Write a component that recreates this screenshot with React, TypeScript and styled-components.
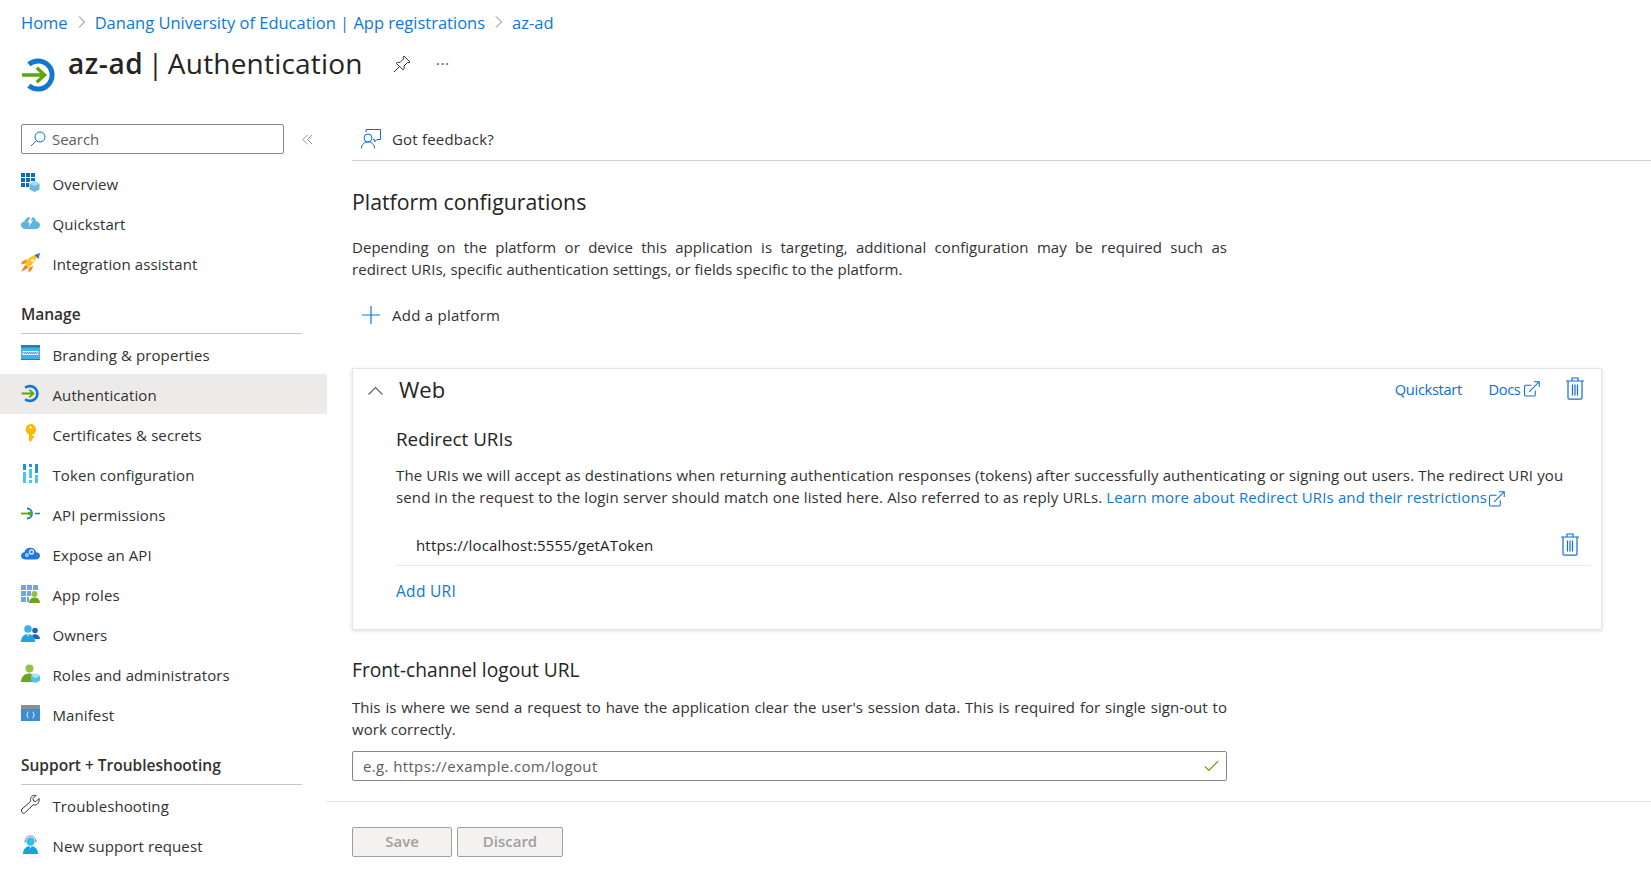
import React from 'react';
import styled, { createGlobalStyle } from 'styled-components';

const GlobalStyle = createGlobalStyle`
  html, body { margin: 0; padding: 0; background: #fff; }
  body {
    font-family: "Open Sans", "Noto Sans", "Liberation Sans", sans-serif;
    color: #252423;
    font-size: 15px;
    overflow: hidden;
  }
  * { box-sizing: border-box; }
`;

const AuthIcon = ({ size }: { size: number }) => (
  <svg width={size} height={size} viewBox="0 0 32 32" fill="none">
    <path d="M7 6.500A12.500 12.500 0 1 1 7 25.500" stroke="#0f78d4" strokeWidth="4.400" />
    <path d="M1 16H21M14 9.500l7 6.500-7 6.500" stroke="#5ca60b" strokeWidth="3" />
  </svg>
);

const GridIcon = () => (
  <svg width="19" height="19" viewBox="0 0 19 19">
    <path fill="#0a6cc2" d="M0 0h4v4H0zM5 0h4v4H5zM10 0h4v4h-4zM0 5h4v4H0zM5 5h4v4H5zM10 5h4v3h-4zM0 10h4v4H0zM5 10h3v4H5z" />
    <path fill="#6cb8e4" d="M13.500 8l5 2.500v6L13.500 19l-5-2.500v-6z" />
    <path fill="#a9d9f2" d="M13.500 8l5 2.500-5 2.500-5-2.500z" />
  </svg>
);

const QuickstartIcon = () => (
  <svg width="19" height="19" viewBox="0 0 19 19">
    <path fill="#5db4de" d="M4.500 16C2 16 0 14.400 0 12.200 0 10.200 1.500 8.800 3.400 8.600 3.900 6.400 5.200 5 7 4.500l5-.500c1.500.6 2.800 2.400 3.300 4.600 2 .1 3.700 1.500 3.700 3.600 0 2.200-2 3.800-4.500 3.800z" />
    <path fill="#fff" d="M10.500 2.500L6.500 9.500h2.300L7.500 14l4.500-6.500H9.700l2.300-4z" />
  </svg>
);

const RocketIcon = () => (
  <svg width="19" height="19" viewBox="0 0 19 19">
    <path fill="#f78d1e" d="M6 6L1 8.500 0 11.500l4.500-1zM12.500 13L10 18l-3 1 1-4.500z" />
    <path fill="#f57c1a" d="M4.500 11.500L0 19l7.500-4.500z" />
    <path fill="#fbc516" d="M4 10.500C7 5 11.500 2.300 16 1.500c-.5 4.500-3.200 9-8.500 12.500z" />
    <path fill="#2f73c9" d="M13.500 2L19 0l-1.500 6z" />
    <circle cx="11.500" cy="7.500" r="1.400" fill="#fff" />
  </svg>
);

const BrandingIcon = () => (
  <svg width="19" height="19" viewBox="0 0 19 19">
    <path fill="#3fb2e8" d="M0 1h19v15H0z" />
    <path fill="#1f7fbd" d="M0 1h19v2.500H0zM0 15h19v1H0z" />
    <path fill="#e3f5fd" d="M1.500 7h16v4h-16z" />
    <path stroke="#3a96cb" strokeWidth=".9" fill="none" d="M2.500 8l1 2 1-2 1 2 1-2 1 2 1-2 1 2 1-2 1 2 1-2 1 2 1-2 1 2 1-2" />
  </svg>
);

const KeyIcon = () => (
  <svg width="19" height="19" viewBox="0 0 19 19">
    <path fill="#fcb900" d="M9.500 0a5.500 5.500 0 0 1 2 10.600V12H13v2h-1.500v1.500L9.500 18 8 16.500v-6A5.500 5.500 0 0 1 9.500 0z" />
    <circle cx="9.500" cy="3.500" r="1.200" fill="#fff2c2" />
  </svg>
);

const TokenIcon = () => (
  <svg width="19" height="19" viewBox="0 0 19 19">
    <path fill="#2a8fd8" d="M2 0h3v6H2zM8 0h3v3H8zM14 0h3v9h-3z" />
    <path fill="#49c6ef" d="M2 8h3v11H2zM8 5h3v9H8zM14 11h3v8h-3zM8 16h3v3H8z" />
  </svg>
);

const ApiIcon = () => (
  <svg width="19" height="19" viewBox="0 0 19 19" fill="none">
    <path d="M6 4.500a5 5 0 1 1 0 10" stroke="#1a7bc6" strokeWidth="1.800" />
    <path d="M14 9.500h5" stroke="#1a7bc6" strokeWidth="1.500" />
    <path d="M0 9.500h9" stroke="#5ca60b" strokeWidth="1.800" />
    <circle cx="9" cy="9.500" r="2" fill="#5ca60b" />
  </svg>
);

const ExposeIcon = () => (
  <svg width="19" height="19" viewBox="0 0 19 19">
    <path fill="#1f79d8" d="M4.500 15.500C2 15.500 0 14 0 11.800 0 9.800 1.500 8.500 3.400 8.300 3.900 5.600 6 3.700 9.500 3.700c3 0 5 1.800 5.800 4.600 2 .1 3.700 1.500 3.700 3.500 0 2.200-2 3.700-4.500 3.700z" />
    <circle cx="10.500" cy="8" r="2" fill="none" stroke="#d6ecfb" strokeWidth="1.300" />
    <circle cx="6" cy="11" r="1.300" fill="none" stroke="#d6ecfb" strokeWidth="1.100" />
  </svg>
);

const AppRolesIcon = () => (
  <svg width="19" height="19" viewBox="0 0 19 19">
    <path fill="#6ea6e6" d="M0 1h5v5H0zM6 1h5v5H6zM12 1h5v5h-5zM0 7h5v5H0zM6 7h4v5H6zM0 13h5v5H0zM6 13h2v5H6z" />
    <circle cx="13.500" cy="10" r="3" fill="#8ec63f" />
    <path fill="#6ba51f" d="M8 19c0-3.500 2.500-5.500 5.500-5.500S19 15.500 19 19z" />
  </svg>
);

const OwnersIcon = () => (
  <svg width="19" height="19" viewBox="0 0 19 19">
    <circle cx="14" cy="6.500" r="2.800" fill="#1f62b9" />
    <path fill="#1f62b9" d="M10 15c0-3 1.800-4.800 4-4.800s5 1.800 5 4.800z" />
    <circle cx="7" cy="5" r="3.800" fill="#39b3e6" />
    <path fill="#26a3d9" d="M0 18c0-5 3-8 7-8s7 3 7 8z" />
    <path fill="#d8f1fb" d="M6 10h2l-1 3z" />
  </svg>
);

const RolesIcon = () => (
  <svg width="19" height="19" viewBox="0 0 19 19">
    <circle cx="8.500" cy="4.500" r="4" fill="#8ec63f" />
    <path fill="#6ba51f" d="M0 18c0-5 3.500-8.500 8-8.500s8 3.500 8 8.500z" />
    <path fill="#4fc3f0" d="M14.500 9.500l4.500 2.300v4.700L14.500 19 10 16.500v-4.700z" />
    <path fill="#a5e3f9" d="M14.500 9.500l4.500 2.300-4.500 2.400-4.500-2.400z" />
  </svg>
);

const ManifestIcon = () => (
  <svg width="19" height="19" viewBox="0 0 19 19">
    <path fill="#8a8f94" d="M0 1h19v4H0z" />
    <path fill="#3b8fd0" d="M0 5h19v12H0z" />
    <path fill="none" stroke="#fff" strokeWidth=".9" d="M7.500 8c-1.200 0-1 1-1 1.500s-.2 1.500-1 1.500c.8 0 1 1 1 1.500s-.2 1.500 1 1.500M11.500 8c1.200 0 1 1 1 1.500s.2 1.500 1 1.500c-.8 0-1 1-1 1.500s.2 1.500-1 1.500" />
  </svg>
);

const WrenchIcon = () => (
  <svg width="19" height="19" viewBox="0 0 19 19" fill="none">
    <path d="M18 3.500l-3 3-2.500-.5-.5-2.500 3-3c-2.500-.8-5.500.8-5.500 4 0 .7.100 1.200.3 1.700L1 14c-1.300 1.300-.6 2.800 0 3.500.8.800 2.300 1.200 3.300 0L12 9.800c3.300 1.200 7-1.800 6-6.300z" stroke="#323130" strokeWidth="1" />
  </svg>
);

const SupportIcon = () => (
  <svg width="19" height="19" viewBox="0 0 19 19">
    <path d="M4 7.500C4 3 6.500 1 9.500 1S15 3 15 7.500" fill="none" stroke="#7a7a7a" strokeWidth="1" />
    <circle cx="9.500" cy="6.500" r="4.200" fill="#2fc0ea" />
    <path fill="#12a5d8" d="M2 19c0-5 3-8 7.500-8S17 14 17 19z" />
    <path fill="#e4f6fc" d="M8.500 11h2l-1 3z" />
  </svg>
);

const ExternalIcon = () => (
  <svg width="16" height="16" viewBox="0 0 17 17" fill="none" stroke="#0f6cd8" strokeWidth="1.100">
    <path d="M8 4.500H2A1.500 1.500 0 0 0 .6 6v9A1.500 1.500 0 0 0 2 16h8.500a1.500 1.500 0 0 0 1.500-1.500V10" />
    <path d="M5.500 11.500L16 1M10.500.8h5.700v5.700" />
  </svg>
);

const TrashIcon = () => (
  <svg width="18" height="23" viewBox="0 0 18 23" fill="none" stroke="#0f6cd8" strokeWidth="1.200">
    <path d="M0 4h18M6 4V1h6v3M2 4v17a1.200 1.200 0 0 0 1.200 1.200h11.600A1.200 1.200 0 0 0 16 21V4M6.500 7.500v11M9 7.500v11M11.500 7.500v11" />
  </svg>
);

const Page = styled.div`
  width: 1651px;
  height: 874px;
  overflow: hidden;
  display: flex;
  flex-direction: column;
`;

const Header = styled.header`
  padding: 12px 0 0 21px;
  height: 124px;
`;

const Breadcrumb = styled.nav`
  display: flex;
  align-items: center;
  height: 20px;
  gap: 10px;
  font-size: 16.500px;
  margin-bottom: 13px;
`;

const Crumb = styled.a`
  color: #0f78d4;
`;

const CrumbChevron = styled.svg`
  width: 7px;
  height: 12px;
  fill: none;
  stroke: #7a7a7a;
  stroke-width: 1;
`;

const TitleRow = styled.div`
  display: flex;
  align-items: flex-start;
`;

const TitleIcon = styled.div`
  width: 36px;
  height: 36px;
  margin-top: 12px;
  margin-right: 11px;
`;

const Title = styled.h1`
  margin: -1px 0 0;
  font-size: 28px;
  font-weight: 400;
  line-height: 38px;
  letter-spacing: 0.2px;
  word-spacing: -3px;
  color: #252423;
  strong {
    font-weight: 600;
    letter-spacing: 0.6px;
  }
`;

const PinButton = styled.span`
  margin: 10px 0 0 30px;
  display: flex;
`;

const MoreButton = styled.span`
  margin: 7px 0 0 25px;
  font-size: 16px;
  color: #605e5c;
  letter-spacing: 0.5px;
  line-height: 24px;
`;

const Body = styled.div`
  flex: 1;
  display: grid;
  grid-template-columns: 327px 1fr;
  min-height: 0;
`;

const Sidebar = styled.aside`
  display: flex;
  flex-direction: column;
  font-size: 15px;
`;

const SearchRow = styled.div`
  display: flex;
  align-items: center;
  padding-left: 21px;
  height: 30px;
  margin-bottom: 9px;
`;

const SearchBox = styled.div`
  width: 263px;
  height: 30px;
  border: 1px solid #8a8886;
  border-radius: 2px;
  display: flex;
  align-items: center;
  gap: 6px;
  padding-left: 8px;
  color: #605e5c;
  letter-spacing: -0.05px;
`;

const CollapseIcon = styled.svg`
  width: 11px;
  height: 11px;
  margin-left: 18px;
  fill: none;
  stroke: #8a8886;
  stroke-width: 1;
`;

const NavItem = styled.a<{ $active?: boolean }>`
  display: flex;
  align-items: center;
  height: 40px;
  padding: 1px 0 0 21px;
  gap: 12.500px;
  color: #323130;
  letter-spacing: 0.1px;
  background: ${p => (p.$active ? '#edebe9' : 'transparent')};
`;

const NavIconBox = styled.span`
  width: 19px;
  height: 19px;
  display: flex;
  flex: none;
  margin-top: -2px;
`;

const GroupTitle = styled.div<{ $top: number }>`
  margin: ${p => p.$top}px 25px 0 21px;
  height: 40px;
  padding-bottom: 8px;
  display: flex;
  align-items: flex-end;
  border-bottom: 1px solid #c8c6c4;
  font-size: 15.500px;
  font-weight: 600;
  color: #323130;
`;

const Main = styled.main`
  display: flex;
  flex-direction: column;
  min-width: 0;
`;

const Toolbar = styled.div`
  margin-left: 25px;
  height: 37px;
  padding: 0 0 7px 9px;
  border-bottom: 1px solid #d2d0ce;
  display: flex;
  align-items: center;
  gap: 11px;
  letter-spacing: 0.2px;
  color: #323130;
`;

const Content = styled.div`
  padding-left: 25px;
  height: 640px;
  flex: none;
`;

const Heading = styled.h2`
  margin: 26px 0 0;
  font-size: 21.300px;
  font-weight: 400;
  line-height: 30px;
  color: #252423;
`;

const Paragraph = styled.p`
  margin: 19px 0 0;
  width: 875px;
  font-size: 15px;
  line-height: 22px;
  letter-spacing: 0.04px;
  text-align: justify;
  color: #323130;
`;

const AddRow = styled.div`
  display: flex;
  align-items: center;
  gap: 12px;
  height: 40px;
  margin-top: 15px;
  padding-left: 10px;
  letter-spacing: 0.25px;
  color: #323130;
`;

const Card = styled.section`
  margin-top: 33px;
  width: 1250px;
  height: 262px;
  border: 1px solid #e8e6e4;
  box-shadow: 0 1px 4px rgba(0, 0, 0, 0.14);
  padding-left: 15px;
`;

const CardHead = styled.div`
  display: flex;
  align-items: center;
  height: 39px;
  padding-right: 17px;
`;

const CardChevron = styled.svg`
  width: 15px;
  height: 9px;
  margin: 4px 16px 0 0;
  fill: none;
  stroke: #605e5c;
  stroke-width: 1.200;
`;

const CardTitle = styled.h3`
  margin: 0;
  flex: 1;
  font-size: 22px;
  font-weight: 400;
  color: #252423;
`;

const CardLink = styled.a`
  color: #0f6cd8;
  font-size: 14.600px;
  letter-spacing: -0.3px;
  display: inline-flex;
  align-items: center;
  gap: 3px;
`;

const CardLinks = styled.div`
  display: flex;
  align-items: center;
  gap: 26.500px;
`;

const CardBody = styled.div`
  padding: 0 10px 0 28px;
`;

const SubHeading = styled.h4`
  margin: 18px 0 0;
  font-size: 18.800px;
  font-weight: 400;
  line-height: 26px;
  color: #252423;
`;

const CardText = styled.p`
  margin: 12px 0 0;
  font-size: 15px;
  line-height: 22px;
  letter-spacing: 0.14px;
  color: #323130;
  a {
    color: #0f78d4;
  }
  svg {
    vertical-align: -4px;
    margin-left: 2px;
  }
`;

const UriRow = styled.div`
  margin-top: 18px;
  height: 40px;
  padding: 0 12px 2px 20px;
  border-bottom: 1px solid #edebe9;
  display: flex;
  align-items: center;
  justify-content: space-between;
  letter-spacing: 0.17px;
  color: #252423;
`;

const AddUri = styled.a`
  display: block;
  margin-top: 14px;
  color: #0f78d4;
  font-size: 15.500px;
  letter-spacing: 0.3px;
`;

const LogoutTitle = styled.h2`
  margin: 27px 0 0;
  font-size: 19.200px;
  font-weight: 400;
  line-height: 26px;
  color: #252423;
`;

const LogoutText = styled(Paragraph)`
  margin-top: 13px;
`;

const InputBox = styled.div`
  margin-top: 11px;
  width: 875px;
  height: 30px;
  border: 1px solid #8a8886;
  border-radius: 2px;
  display: flex;
  align-items: center;
  justify-content: space-between;
  padding: 0 7px 0 10px;
  color: #605e5c;
  letter-spacing: 0.36px;
`;

const Footer = styled.footer`
  border-top: 1px solid #e1dfdd;
  padding: 25px 0 0 25px;
  display: flex;
  gap: 5px;
`;

const FooterButton = styled.button<{ $width: number }>`
  width: ${p => p.$width}px;
  height: 30px;
  border: 1px solid #a19f9d;
  border-radius: 2px;
  background: #f3f2f1;
  color: #a19f9d;
  font-family: inherit;
  font-size: 15px;
  font-weight: 600;
  padding: 0 0 2px;
`;

const topItems = [
  { label: 'Overview', icon: <GridIcon /> },
  { label: 'Quickstart', icon: <QuickstartIcon /> },
  { label: 'Integration assistant', icon: <RocketIcon /> },
];

const manageItems = [
  { label: 'Branding & properties', icon: <BrandingIcon /> },
  { label: 'Authentication', icon: <AuthIcon size={19} />, active: true },
  { label: 'Certificates & secrets', icon: <KeyIcon /> },
  { label: 'Token configuration', icon: <TokenIcon /> },
  { label: 'API permissions', icon: <ApiIcon /> },
  { label: 'Expose an API', icon: <ExposeIcon /> },
  { label: 'App roles', icon: <AppRolesIcon /> },
  { label: 'Owners', icon: <OwnersIcon /> },
  { label: 'Roles and administrators', icon: <RolesIcon /> },
  { label: 'Manifest', icon: <ManifestIcon /> },
];

const supportItems = [
  { label: 'Troubleshooting', icon: <WrenchIcon /> },
  { label: 'New support request', icon: <SupportIcon /> },
];

type Item = { label: string; icon: React.ReactNode; active?: boolean };

const NavList = ({ items }: { items: Item[] }) => (
  <>
    {items.map(item => (
      <NavItem key={item.label} $active={item.active}>
        <NavIconBox>{item.icon}</NavIconBox>
        {item.label}
      </NavItem>
    ))}
  </>
);

const Chevron = () => (
  <CrumbChevron viewBox="0 0 7 12">
    <path d="M1 .5L6.500 6 1 11.500" />
  </CrumbChevron>
);

export default function App() {
  return (
    <Page>
      <GlobalStyle />
      <Header>
        <Breadcrumb>
          <Crumb>Home</Crumb>
          <Chevron />
          <Crumb>Danang University of Education | App registrations</Crumb>
          <Chevron />
          <Crumb>az-ad</Crumb>
        </Breadcrumb>
        <TitleRow>
          <TitleIcon>
            <AuthIcon size={36} />
          </TitleIcon>
          <Title>
            <strong>az-ad</strong> | Authentication
          </Title>
          <PinButton>
            <svg width="18" height="18" viewBox="0 0 18 18" fill="none" stroke="#323130" strokeWidth="1">
              <path d="M11 1l6 6-1 .8-1.500-.3-3.500 3.500c.5 1.500.2 2.800-.8 3.800L6.500 11.500 1 17l5.500-5.500L3.200 8.300c1-1 2.300-1.300 3.800-.8l3.500-3.500-.3-1.500z" />
            </svg>
          </PinButton>
          <MoreButton>···</MoreButton>
        </TitleRow>
      </Header>
      <Body>
        <Sidebar>
          <SearchRow>
            <SearchBox>
              <svg width="16" height="16" viewBox="0 0 16 16" fill="none" stroke="#0f6cd8" strokeWidth="1">
                <circle cx="10" cy="6" r="5" />
                <path d="M6.500 9.500L1 15" />
              </svg>
              Search
            </SearchBox>
            <CollapseIcon viewBox="0 0 12 12">
              <path d="M6 1L1 6l5 5M11 1L6 6l5 5" />
            </CollapseIcon>
          </SearchRow>
          <NavList items={topItems} />
          <GroupTitle $top={11}>Manage</GroupTitle>
          <NavList items={manageItems} />
          <GroupTitle $top={11}>Support + Troubleshooting</GroupTitle>
          <NavList items={supportItems} />
        </Sidebar>
        <Main>
          <Toolbar>
            <svg width="20" height="20" viewBox="0 0 20 20" fill="none" stroke="#0f6cd8" strokeWidth="1">
              <path d="M5 3V.5h14.500v10H16l-2.500 2.500v-2.500H12" />
              <circle cx="7" cy="9" r="4" />
              <path d="M.5 19.500c0-4 2.500-6.500 6.500-6.500s6.500 2.500 6.500 6.500" />
            </svg>
            Got feedback?
          </Toolbar>
          <Content>
            <Heading>Platform configurations</Heading>
            <Paragraph>
              Depending on the platform or device this application is targeting, additional configuration may be required such as redirect{'\u00a0'}URIs, specific authentication settings, or fields specific to the platform.
            </Paragraph>
            <AddRow>
              <svg width="18" height="18" viewBox="0 0 18 18" stroke="#0f78d4" strokeWidth="1.200">
                <path d="M9 0v18M0 9h18" />
              </svg>
              Add a platform
            </AddRow>
            <Card>
              <CardHead>
                <CardChevron viewBox="0 0 15 9">
                  <path d="M.5 8.500L7.500 1.500l7 7" />
                </CardChevron>
                <CardTitle>Web</CardTitle>
                <CardLinks>
                  <CardLink>Quickstart</CardLink>
                  <CardLink>
                    Docs
                    <ExternalIcon />
                  </CardLink>
                  <TrashIcon />
                </CardLinks>
              </CardHead>
              <CardBody>
                <SubHeading>Redirect URIs</SubHeading>
                <CardText>
                  The URIs we will accept as destinations when returning authentication responses (tokens) after successfully authenticating or signing out users. The redirect URI you send in the request to the login server should match one listed here. Also referred to as reply URLs.{' '}
                  <a>
                    Learn more about Redirect URIs and their restrictions
                    <ExternalIcon />
                  </a>
                </CardText>
                <UriRow>
                  https://localhost:5555/getAToken
                  <TrashIcon />
                </UriRow>
                <AddUri>Add URI</AddUri>
              </CardBody>
            </Card>
            <LogoutTitle>Front-channel logout URL</LogoutTitle>
            <LogoutText>
              This is where we send a request to have the application clear the user's session data. This is required for single sign-out to work correctly.
            </LogoutText>
            <InputBox>
              e.g. https://example.com/logout
              <svg width="15" height="12" viewBox="0 0 17 13" fill="none" stroke="#57a300" strokeWidth="1.300">
                <path d="M1 7l4.500 4.500L16 1" />
              </svg>
            </InputBox>
          </Content>
          <Footer>
            <FooterButton $width={100}>Save</FooterButton>
            <FooterButton $width={106}>Discard</FooterButton>
          </Footer>
        </Main>
      </Body>
    </Page>
  );
}
